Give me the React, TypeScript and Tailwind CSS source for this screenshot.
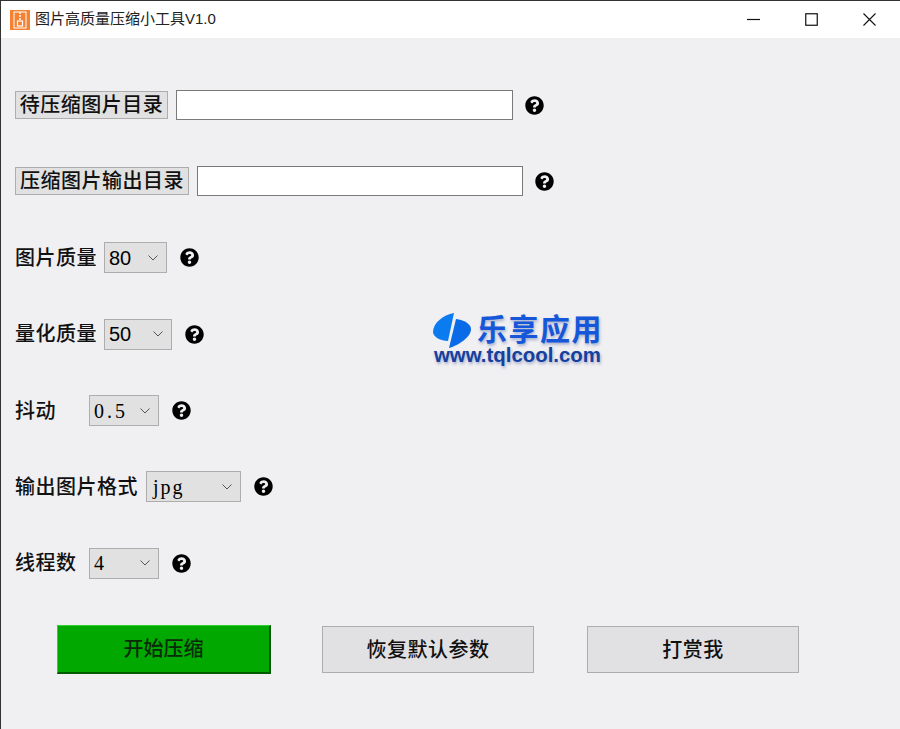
import React from 'react';
import { FaQuestionCircle } from 'react-icons/fa';

const labelFont = "font-['Liberation_Serif','Noto_Sans_CJK_SC',serif]";

const Help = ({ className = '' }: { className?: string }) => (
  <FaQuestionCircle className={`size-[19px] shrink-0 text-black ${className}`} />
);

// 下拉框
const Select = ({ value, width, valueClass = '' }: { value: string; width: string; valueClass?: string }) => (
  <div className={`${width} h-[31px] shrink-0 flex items-center justify-between pl-1 pr-2 bg-[#e1e1e1] border border-[#adadad] text-[20px] leading-none text-black`}>
    <span className={valueClass}>{value}</span>
    <svg width="10" height="6" viewBox="0 0 10 6" fill="none" stroke="#555" strokeWidth="1">
      <path d="M0.5 0.5 L5 5 L9.5 0.5" />
    </svg>
  </div>
);

const Label = ({ children }: { children: React.ReactNode }) => (
  <span className="text-[20px] leading-none font-medium tracking-[0.5px] text-[#111] whitespace-nowrap">{children}</span>
);

const Row = ({ children }: { children: React.ReactNode }) => (
  <div className="h-[30px] flex items-center">{children}</div>
);

const App = () => {
  return (
    <div className={`relative w-[900px] h-[729px] overflow-hidden bg-[#f0eff1] border-t border-l border-[#333] ${labelFont}`}>
      {/* 标题栏 */}
      <div className="h-[37px] bg-white flex items-center pl-[9px] font-['Liberation_Sans','Noto_Sans_CJK_SC',sans-serif]">
        <svg width="20" height="20" viewBox="0 0 20 20" className="shrink-0">
          <rect x="0" y="0" width="20" height="20" fill="#f58233" />
          <rect x="4" y="2" width="12" height="16" fill="none" stroke="#fff" strokeWidth="1" />
          <path d="M9 3h2M9 6h2M9 9h2" stroke="#fff" strokeWidth="1.4" />
          <rect x="7.5" y="11" width="5" height="5" fill="none" stroke="#fff" strokeWidth="1.2" />
        </svg>
        <span className="ml-[5px] text-[15px] text-[#222]">图片高质量压缩小工具V1.0</span>
        <div className="ml-auto pr-[2px] flex items-center">
          <div className="w-[58px] h-[37px] flex items-center justify-center">
            <svg width="13" height="3" viewBox="0 0 13 3"><path d="M0 1.5H13" stroke="#111" strokeWidth="1.2" /></svg>
          </div>
          <div className="w-[58px] h-[37px] flex items-center justify-center">
            <svg width="13" height="13" viewBox="0 0 13 13"><rect x="0.75" y="0.75" width="11.5" height="11.5" fill="none" stroke="#111" strokeWidth="1.2" /></svg>
          </div>
          <div className="w-[58px] h-[37px] flex items-center justify-center">
            <svg width="13" height="13" viewBox="0 0 13 13"><path d="M0.5 0.5L12.5 12.5M12.5 0.5L0.5 12.5" stroke="#111" strokeWidth="1.1" /></svg>
          </div>
        </div>
      </div>

      {/* 表单 */}
      <div className="flex flex-col gap-[46.4px] pt-[52px] pl-[14px]">
        <Row>
          <div className="w-[153px] h-[28px] flex items-center justify-center bg-[#e1e1e1] border border-[#adadad]">
            <Label>待压缩图片目录</Label>
          </div>
          <div className="ml-2 w-[337px] h-[30px] bg-white border border-[#7a7a7a]" />
          <Help className="ml-3" />
        </Row>
        <Row>
          <div className="w-[174px] h-[28px] flex items-center justify-center bg-[#e1e1e1] border border-[#adadad]">
            <Label>压缩图片输出目录</Label>
          </div>
          <div className="ml-2 w-[326px] h-[30px] bg-white border border-[#7a7a7a]" />
          <Help className="ml-3" />
        </Row>
        <Row>
          <Label>图片质量</Label>
          <div className="ml-[7px]"><Select value="80" width="w-[63px]" valueClass="font-['Liberation_Sans',sans-serif]" /></div>
          <Help className="ml-[13px]" />
        </Row>
        <Row>
          <Label>量化质量</Label>
          <div className="ml-[7px]"><Select value="50" width="w-[68px]" valueClass="font-['Liberation_Sans',sans-serif]" /></div>
          <Help className="ml-[13px]" />
        </Row>
        <Row>
          <div className="w-[74px] flex items-center"><Label>抖动</Label></div>
          <Select value="0.5" width="w-[70px]" valueClass="tracking-[3px] font-medium" />
          <Help className="ml-[13px]" />
        </Row>
        <Row>
          <Label>输出图片格式</Label>
          <div className="ml-[8px]"><Select value="jpg" width="w-[95px]" valueClass="ml-[2px] tracking-[2px] font-medium" /></div>
          <Help className="ml-[13px]" />
        </Row>
        <Row>
          <div className="w-[74px] flex items-center"><Label>线程数</Label></div>
          <Select value="4" width="w-[70px]" valueClass="font-medium" />
          <Help className="ml-[13px]" />
        </Row>
      </div>

      {/* 底部按钮 */}
      <div className="mt-[47px] ml-[56px] flex items-center">
        <div className="w-[214px] h-[49px] flex items-center justify-center bg-[#00a800] border-t border-l border-[#2fd02f] border-r-2 border-b-2 border-r-[#005a00] border-b-[#005a00]">
          <span className="text-[20px] font-medium text-[#0a2a0a]">开始压缩</span>
        </div>
        <div className="ml-[51px] w-[212px] h-[47px] flex items-center justify-center bg-[#e1e0e2] border border-[#adadad]">
          <span className="text-[20px] font-medium tracking-[0.5px] text-[#111]">恢复默认参数</span>
        </div>
        <div className="ml-[53px] w-[212px] h-[47px] flex items-center justify-center bg-[#e1e0e2] border border-[#adadad]">
          <span className="text-[20px] font-medium tracking-[0.5px] text-[#111]">打赏我</span>
        </div>
      </div>

      {/* 水印 */}
      <div className="absolute left-[430px] top-[311px] w-[175px] h-[56px] font-['Liberation_Sans','Noto_Sans_CJK_SC',sans-serif]">
        <svg width="42" height="38" viewBox="0 0 42 38" className="absolute left-0 top-0">
          <path d="M23 1 C12 3 2 11 2 20 C2 25 10 29 17 29 Z" fill="#0a7cf0" />
          <path d="M25 7 C33 8 40 12 40 17 C40 25 28 33 18 36 Z" fill="#0a6be8" />
        </svg>
        <span className="absolute left-[46px] top-[1px] text-[30px] leading-[34px] font-bold tracking-[1.5px] text-[#1557d8] whitespace-nowrap [text-shadow:1px_2px_3px_rgba(30,60,140,0.35)]">乐享应用</span>
        <span className="absolute left-[3px] top-[32px] text-[20.4px] leading-[22px] font-bold text-[#14409e] whitespace-nowrap [text-shadow:1px_2px_3px_rgba(30,60,140,0.35)]">www.tqlcool.com</span>
      </div>
    </div>
  );
};

export default App;
